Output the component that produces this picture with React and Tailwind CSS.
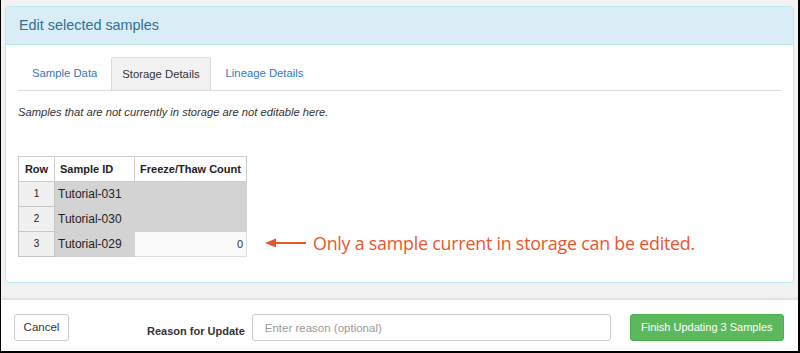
const rows = [
  { n: 1, id: 'Tutorial-031', count: null },
  { n: 2, id: 'Tutorial-030', count: null },
  { n: 3, id: 'Tutorial-029', count: '0' },
];

export default function App() {
  return (
    <div className="w-[800px] h-[353px] bg-[#f2f2f2] border-l border-r-2 border-b-2 border-black flex flex-col font-['Liberation_Sans',Arial,sans-serif] overflow-hidden">
      <div className="pt-[6px] px-[4px] h-[299px] flex flex-col">
        <div className="h-[277px] border border-[#bce8f1] rounded-[4px] bg-white overflow-hidden">
          <div className="h-[38px] bg-[#d9edf7] border-b border-[#bce8f1] px-[13px] flex items-center text-[14.4px] text-[#31708f]">
            Edit selected samples
          </div>
          <div className="px-[12px]">
            <div className="mt-[12px] flex border-b border-[#ddd] text-[11.3px]">
              <div className="h-[33px] px-[14px] flex items-center text-[#337ab7]">Sample Data</div>
              <div className="h-[33px] px-[10px] flex items-center bg-[#f2f2f2] border border-b-0 border-[#ddd] rounded-t-[3px] text-[#333]">Storage Details</div>
              <div className="h-[33px] px-[15px] flex items-center text-[#337ab7]">Lineage Details</div>
            </div>
            <p className="mt-[13px] text-[11.2px] italic text-[#333]">Samples that are not currently in storage are not editable here.</p>
            <div className="mt-[35px] flex items-end">
              <table className="border-collapse text-[12px] text-[#222]">
                <thead>
                  <tr className="h-[25px] bg-white font-bold text-[11px]">
                    <th className="w-[36px] border border-[#ccc] font-bold">Row</th>
                    <th className="w-[80px] border border-[#ccc] font-bold text-left pl-[5px]">Sample ID</th>
                    <th className="w-[112px] border border-[#ccc] font-bold">Freeze/Thaw Count</th>
                  </tr>
                </thead>
                <tbody>
                  {rows.map((r) => (
                    <tr key={r.n} className="h-[25px]">
                      <td className="border border-[#c6c6c6] bg-[#f0f0f0] text-center text-[10px]">{r.n}</td>
                      <td className="border border-[#d3d3d3] bg-[#d3d3d3] pl-[3px]">{r.id}</td>
                      <td className={r.count ? 'border border-[#ddd] bg-[#fafafa] text-right pr-[3px] text-[11px] text-[#333]' : 'border border-[#d3d3d3] bg-[#d3d3d3]'}>
                        {r.count}
                      </td>
                    </tr>
                  ))}
                </tbody>
              </table>
              <div className="ml-[18px] mb-[1px] h-[25px] flex items-center gap-[7px] text-[#e8572b]">
                <svg width="41" height="10" viewBox="0 0 41 10">
                  <path d="M0 5 L11 0.5 L11 9.5 Z" fill="#e8572b" />
                  <rect x="10" y="4" width="31" height="2" fill="#e8572b" />
                </svg>
                <span className="text-[17.8px] font-['Open_Sans',sans-serif] tracking-[-0.2px]">Only a sample current in storage can be edited.</span>
              </div>
            </div>
          </div>
        </div>
      </div>
      <div className="flex-1 bg-white border-t border-[#e0e0e0] shadow-[0_-1px_2px_rgba(0,0,0,0.08)] px-[13px] pt-[14px] flex items-start">
        <button className="h-[27px] w-[55px] border border-[#ccc] rounded-[3px] bg-white text-[11.5px] text-[#333]">Cancel</button>
        <span className="ml-[78px] mt-[9px] whitespace-nowrap text-[11px] font-bold text-[#333]">Reason for Update</span>
        <input
          className="ml-[7px] w-[359px] h-[27px] border border-[#ccc] rounded-[3px] px-[12px] text-[11.5px] placeholder-[#999] outline-none"
          placeholder="Enter reason (optional)"
        />
        <button className="ml-[19px] w-[154px] h-[27px] rounded-[3px] bg-[#5cb85c] border border-[#4cae4c] text-white text-[11px]">Finish Updating 3 Samples</button>
      </div>
    </div>
  );
}
